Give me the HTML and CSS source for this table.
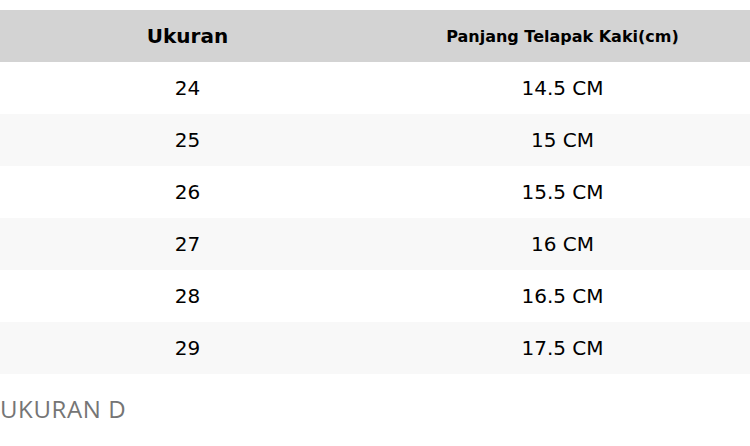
FILE: index.html
```html
<!DOCTYPE html>
<html>
<head>
<meta charset="utf-8">
<link rel="stylesheet" href="styles.css">
</head>
<body>
<div class="page">
  <table class="size-table">
    <thead>
      <tr><th class="h-big">Ukuran</th><th class="h-small">Panjang Telapak Kaki(cm)</th></tr>
    </thead>
    <tbody>
      <tr><td>24</td><td>14.5 CM</td></tr>
      <tr><td>25</td><td>15 CM</td></tr>
      <tr><td>26</td><td>15.5 CM</td></tr>
      <tr><td>27</td><td>16 CM</td></tr>
      <tr><td>28</td><td>16.5 CM</td></tr>
      <tr><td>29</td><td>17.5 CM</td></tr>
    </tbody>
  </table>
  <div class="caption">UKURAN D</div>
</div>
</body>
</html>
```
FILE: styles.css
```css
html, body {
  margin: 0;
  padding: 0;
  background: #ffffff;
}
.page {
  padding-top: 10px;
}
.size-table {
  width: 750px;
  border-collapse: collapse;
  table-layout: fixed;
  font-family: "DejaVu Sans", sans-serif;
  color: #000;
}
.size-table th, .size-table td {
  width: 50%;
  height: 52px;
  padding: 0;
  text-align: center;
  vertical-align: middle;
}
.size-table thead tr {
  background: #d3d3d3;
}
.h-big {
  font-size: 20px;
  font-weight: bold;
}
.h-small {
  font-size: 16px;
  font-weight: bold;
}
.size-table td {
  font-size: 20px;
}
.size-table tbody tr:nth-child(even) {
  background: #f8f8f8;
}
.caption {
  font-family: "Open Sans", sans-serif;
  font-size: 24px;
  letter-spacing: 0.6px;
  color: #757575;
  margin-top: 20px;
  line-height: 30px;
}
```
